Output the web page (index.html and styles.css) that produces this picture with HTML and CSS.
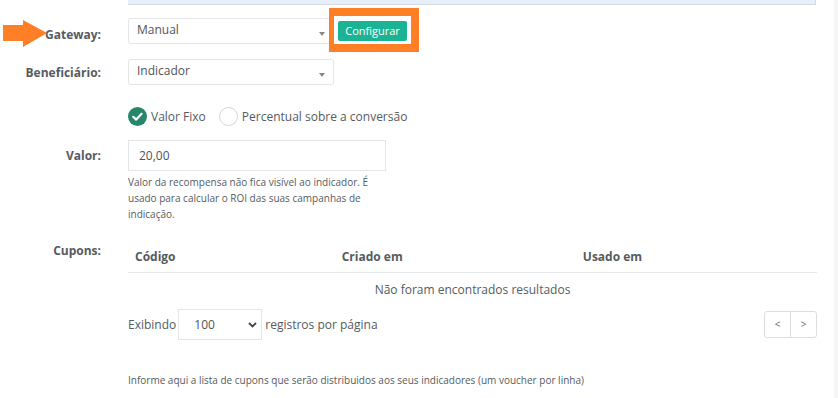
FILE: index.html
```html
<!DOCTYPE html>
<html lang="pt-BR">
<head>
<meta charset="utf-8">
<title>Recompensa</title>
<link rel="stylesheet" href="styles.css">
</head>
<body>
<div class="page">
  <div class="row row-top">
    <div class="label"></div>
    <div class="alert-box"></div>
  </div>

  <div class="row row-gateway">
    <div class="label label-gateway">
      <svg class="arrow" width="48" height="30" viewBox="0 0 48 30" aria-hidden="true">
        <polygon points="3,6 23,6 23,1 47,14 23,28 23,22 3,22" fill="#ff7f27"/>
      </svg>
      Gateway:
    </div>
    <div class="control-line">
      <div class="select">Manual<span class="caret"></span></div>
      <div class="btn-wrap">
        <button class="btn-config">Configurar</button>
        <span class="highlight"></span>
      </div>
    </div>
  </div>

  <div class="row row-benef">
    <div class="label label-benef">Beneficiário:</div>
    <div class="control-line">
      <div class="select">Indicador<span class="caret"></span></div>
    </div>
  </div>

  <div class="row row-radio">
    <div class="label"></div>
    <div class="radios">
      <span class="radio checked">
        <svg width="19" height="19" viewBox="0 0 19 19" aria-hidden="true">
          <circle cx="9.5" cy="9.5" r="9.5" fill="#26866a"/>
          <polyline points="5.2,9.8 8.2,12.6 13.6,6.8" fill="none" stroke="#fff" stroke-width="2.2" stroke-linecap="round" stroke-linejoin="round"/>
        </svg>
        Valor Fixo
      </span>
      <span class="radio">
        <span class="circle"></span>
        Percentual sobre a conversão
      </span>
    </div>
  </div>

  <div class="row row-valor">
    <div class="label label-valor">Valor:</div>
    <div class="valor-col">
      <div class="input">20,00</div>
      <p class="help">Valor da recompensa não fica visível ao indicador. É usado para calcular o ROI das suas campanhas de indicação.</p>
    </div>
  </div>

  <div class="row row-cupons">
    <div class="label label-cupons">Cupons:</div>
    <div class="cupons-col">
      <table class="table">
        <thead>
          <tr><th class="c1">Código</th><th class="c2">Criado em</th><th class="c3">Usado em</th></tr>
        </thead>
        <tbody>
          <tr><td colspan="3" class="empty">Não foram encontrados resultados</td></tr>
        </tbody>
      </table>
      <div class="table-footer">
        <div class="length">
          <span>Exibindo</span>
          <div class="len-select">100
            <svg class="chev" width="9" height="6" viewBox="0 0 9 6" aria-hidden="true"><polyline points="1,1 4.5,4.5 8,1" fill="none" stroke="#444" stroke-width="1.8"/></svg>
          </div>
          <span>registros por página</span>
        </div>
        <div class="pager">
          <span class="pg">&lt;</span><span class="pg">&gt;</span>
        </div>
      </div>
      <p class="info">Informe aqui a lista de cupons que serão distribuidos aos seus indicadores (um voucher por linha)</p>
    </div>
  </div>
</div>
<div class="scrollstrip"></div>
</body>
</html>
```

FILE: styles.css
```css
html, body {
  margin: 0;
  padding: 0;
  background: #ffffff;
}
body {
  font-family: "Open Sans", "Noto Sans", "Liberation Sans", sans-serif;
  font-size: 12px;
  color: #555b60;
  width: 838px;
  height: 398px;
  overflow: hidden;
  position: relative;
}
.page {
  width: 817px;
}
.row {
  display: flex;
  align-items: flex-start;
}
.label {
  width: 101px;
  flex: 0 0 101px;
  margin-right: 27px;
  text-align: right;
  font-weight: 700;
  font-size: 12px;
  line-height: 17px;
  color: #565b61;
  position: relative;
}
.alert-box {
  flex: 1;
  height: 4px;
  background: #e8effc;
  border-bottom: 1px solid #d6d9de;
  border-right: 1px solid #d6d9de;
  margin-right: 1px;
}

/* Gateway */
.row-gateway {
  margin-top: 13px;
  height: 35px;
}
.label-gateway {
  padding-top: 8px;
}
.arrow {
  position: absolute;
  left: 0;
  top: 1px;
}
.control-line {
  display: flex;
  align-items: center;
}
.select {
  position: relative;
  box-sizing: border-box;
  width: 206px;
  height: 26px;
  border: 1px solid #e3e5e8;
  border-radius: 3px;
  padding: 1px 8px 0 8px;
  line-height: 20px;
  font-size: 12px;
  color: #50555a;
  background: #fff;
}
.caret {
  position: absolute;
  right: 8px;
  top: 13px;
  width: 0;
  height: 0;
  border-left: 3.5px solid transparent;
  border-right: 3.5px solid transparent;
  border-top: 4px solid #888;
}
.btn-wrap {
  position: relative;
  margin-left: 4px;
}
.btn-config {
  display: block;
  box-sizing: border-box;
  width: 69px;
  height: 20px;
  border: 0;
  border-radius: 2px;
  background: #1ab394;
  color: #ffffff;
  font-family: "Open Sans", "Noto Sans", sans-serif;
  font-size: 11px;
  line-height: 20px;
  padding: 0;
  text-align: center;
}
.highlight {
  position: absolute;
  left: -9px;
  top: -13px;
  width: 90px;
  height: 44px;
  box-sizing: border-box;
  border-style: solid;
  border-color: #ff7f27;
  border-width: 8px 8px 8px 5px;
}

/* Beneficiario */
.row-benef {
  margin-top: 6px;
}
.label-benef {
  padding-top: 5px;
}

/* radio */
.row-radio {
  margin-top: 22px;
}
.radios {
  display: flex;
  align-items: center;
  height: 19px;
  font-size: 12px;
  color: #555b60;
}
.radio {
  display: inline-flex;
  align-items: center;
  gap: 4px;
}
.radio svg {
  display: block;
}
.circle {
  display: inline-block;
  box-sizing: border-box;
  width: 19px;
  height: 19px;
  border-radius: 50%;
  border: 1px solid #d4d6d8;
  background: #fff;
}
.radio.checked {
  margin-right: 13px;
}

/* valor */
.row-valor {
  margin-top: 14px;
}
.label-valor {
  padding-top: 7px;
}
.valor-col {
  width: 258px;
}
.input {
  box-sizing: border-box;
  width: 258px;
  height: 31px;
  border: 1px solid #e3e5e8;
  padding: 0 10px;
  line-height: 29px;
  font-size: 12px;
  color: #50555a;
}
.help {
  margin: 3px 0 0 0;
  font-size: 10px;
  line-height: 16px;
  color: #565b61;
}

/* cupons */
.row-cupons {
  margin-top: 20px;
}
.cupons-col {
  flex: 1;
}
.table {
  width: 100%;
  border-collapse: collapse;
  margin-top: 6px;
}
.table th {
  text-align: left;
  font-weight: 700;
  font-size: 12px;
  line-height: 17px;
  color: #555b60;
  padding: 0 7px 7px 7px;
  border-bottom: 1px solid #e7eaec;
}
.table th.c1 { width: 30%; }
.table th.c2 { width: 35%; }
.table td.empty {
  text-align: center;
  font-size: 12px;
  line-height: 17px;
  padding: 8px 0 0 0;
  color: #555b60;
}
.table-footer {
  display: flex;
  justify-content: space-between;
  align-items: center;
  margin-top: 11px;
}
.length {
  display: flex;
  align-items: center;
  font-size: 12px;
  color: #555b60;
}
.len-select {
  position: relative;
  box-sizing: border-box;
  width: 84px;
  height: 31px;
  border: 1px solid #e3e5e8;
  margin: 0 3px 0 2px;
  padding: 0 0 0 15px;
  line-height: 29px;
  font-size: 12px;
  color: #50555a;
}
.chev {
  position: absolute;
  right: 4px;
  top: 12px;
}
.pager {
  display: flex;
  box-sizing: border-box;
  height: 27px;
  border: 1px solid #dcdee0;
  border-radius: 3px;
}
.pg {
  width: 25px;
  text-align: center;
  line-height: 25px;
  font-size: 10px;
  color: #666;
}
.pg + .pg {
  border-left: 1px solid #dcdee0;
}
.info {
  margin: 33px 0 0 0;
  font-size: 10px;
  line-height: 14px;
  color: #555b60;
}
.scrollstrip {
  position: absolute;
  right: 0;
  top: 0;
  width: 4px;
  height: 398px;
  background: #f6f6f6;
}
```
